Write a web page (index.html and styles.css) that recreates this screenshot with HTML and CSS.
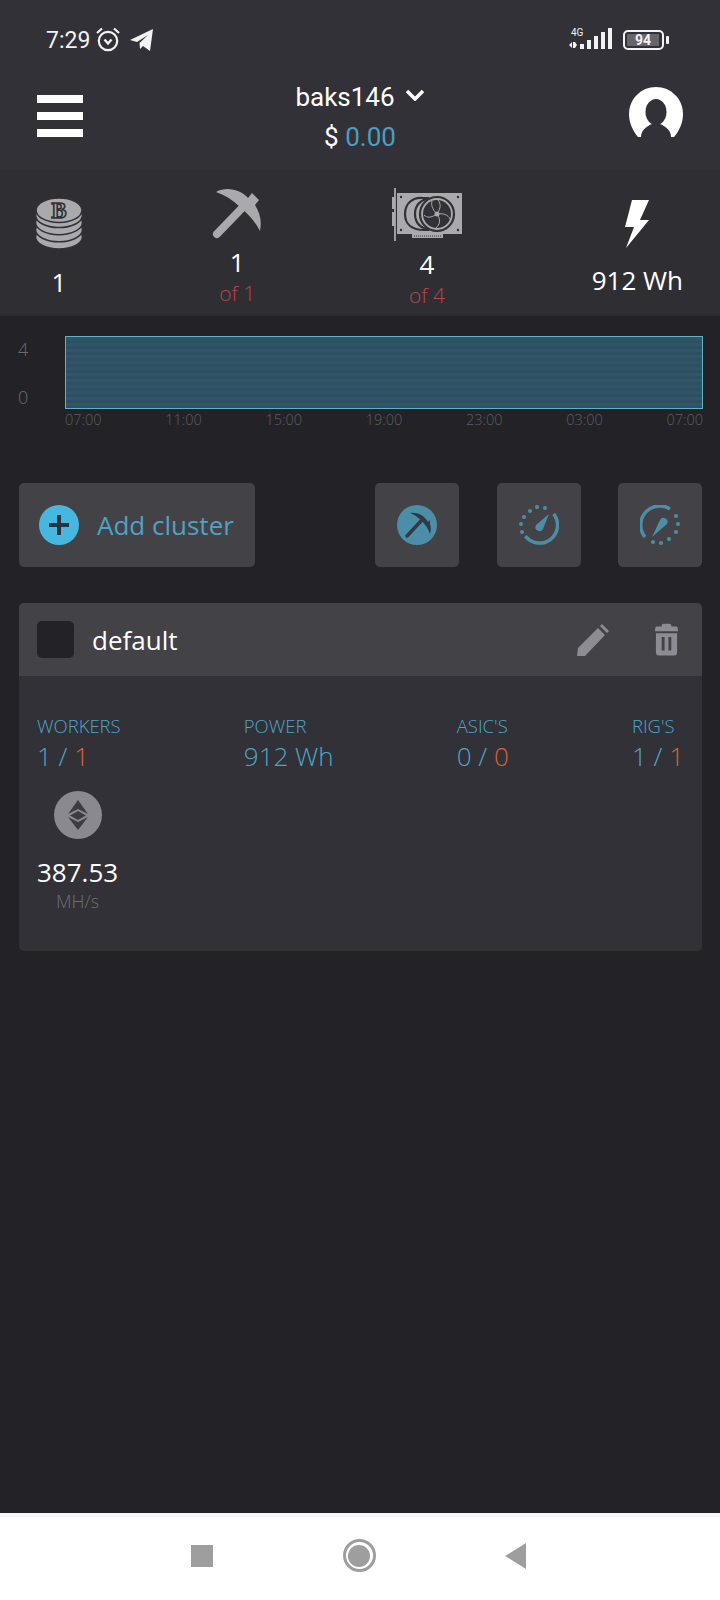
FILE: index.html
```html
<!DOCTYPE html>
<html lang="en">
<head>
<meta charset="utf-8">
<title>Clusters</title>
<link rel="stylesheet" href="styles.css">
</head>
<body>
<div class="page">
  <div class="top">
    <div class="status">
      <div class="status-left">
        <span class="clock">7:29</span>
        <svg class="alarm" width="26" height="26" viewBox="0 0 26 26"><circle cx="13" cy="14" r="9.2" fill="none" stroke="#f2f2f2" stroke-width="2.2"/><path d="M2 6 L7 1.5 M24 6 L19 1.5" stroke="#f2f2f2" stroke-width="2.2" fill="none"/><path d="M9.5 12.5 L13 16.5 L16.5 12.5" stroke="#f2f2f2" stroke-width="2.4" fill="none"/></svg>
        <svg class="plane" width="24" height="24" viewBox="0 0 24 24"><path d="M0 12 L23 1 L20 23 L13 18 L10 21 L9.500 15 L18 7 L7 14 Z" fill="#f2f2f2"/></svg>
      </div>
      <div class="status-right">
        <svg width="46" height="26" viewBox="0 0 46 26"><text x="3" y="9" class="net">4G</text><path d="M1 18 L4 15 V21 Z M5 15 H7 L9 18 L7 21 H5 Z" fill="#f2f2f2"/><g fill="#f2f2f2"><rect x="12" y="17" width="4" height="5"/><rect x="19" y="13" width="4" height="9"/><rect x="26" y="9" width="4" height="13"/><rect x="33" y="5" width="4" height="17"/><rect x="40" y="1" width="4" height="21"/></g></svg>
        <div class="battery"><div class="battery-fill"><span>94</span></div></div>
        <span class="battery-tip"></span>
      </div>
    </div>
    <header class="head">
      <div class="burger"><span></span><span></span><span></span></div>
      <div class="title">
        <div class="user">baks146
          <svg width="20" height="12" viewBox="0 0 20 12"><path d="M2 2 L10 10 L18 2" fill="none" stroke="#fff" stroke-width="3.500"/></svg>
        </div>
        <div class="money">$ <span class="blue">0.00</span></div>
      </div>
      <svg class="avatar" width="54" height="50" viewBox="0 0 54 50"><path d="M27 0 C42 0 54 12 54 27 C54 36 50 44 45 50 H9 C4 44 0 36 0 27 C0 12 12 0 27 0 Z" fill="#fff"/><ellipse cx="27" cy="25" rx="10.500" ry="13" fill="#323137"/><path d="M12 50 C12 43 18 39 23 37 H31 C36 39 42 43 42 50 Z" fill="#323137"/></svg>
    </header>
  </div>

  <section class="stats">
    <div class="stat">
      <svg width="48" height="52" viewBox="0 0 46 51"><g fill="#aaa9ab" stroke="#323137" stroke-width="1.5"><ellipse cx="23" cy="38" rx="23" ry="12"/><ellipse cx="23" cy="31" rx="23" ry="12"/><ellipse cx="23" cy="24" rx="23" ry="12"/><ellipse cx="23" cy="17" rx="23" ry="12"/><ellipse cx="23" cy="12" rx="22.500" ry="12"/></g><text x="23" y="20" class="btc">B</text></svg>
      <div class="num val-low">1</div>
    </div>
    <div class="stat">
      <svg width="50" height="50" viewBox="0 0 50 50"><path d="M4 3 C15 -3 29 1 36 9 L40 4 L47 11 L43 16 C48 24 50 32 48 42 C43 32 35 24 28 18 C21 11 13 6 4 3 Z" fill="#aaa9ab"/><path d="M5 45 L32 17" stroke="#aaa9ab" stroke-width="8" stroke-linecap="round"/></svg>
      <div class="num">1</div>
      <div class="of">of 1</div>
    </div>
    <div class="stat">
      <svg width="71" height="53" viewBox="0 0 71 53">
        <path d="M4 0 V53" stroke="#aaa9ab" stroke-width="1.800"/><path d="M1 9 H4 V21 H1 Z M1 24 H4 V38 H1 Z" fill="#aaa9ab"/>
        <rect x="6" y="5" width="65" height="41" fill="#aaa9ab"/>
        <path d="M21 46 H52 V50 H21 Z" fill="#aaa9ab"/><path d="M23 48 H50" stroke="#323137" stroke-width="1" stroke-dasharray="1 1"/>
        <path d="M32 10 C22 9 14 15 14 26 C14 37 22 42 33 42 H38 C30 40 24 35 24 26 C24 17 30 12 38 10 Z" fill="none" stroke="#323137" stroke-width="2.200"/>
        <circle cx="46" cy="26" r="17" fill="none" stroke="#323137" stroke-width="2.200"/>
        <circle cx="46" cy="26" r="14" fill="#323137"/>
        <g stroke="#aaa9ab" stroke-width="1" fill="none"><path d="M46 26 C50 20 50 16 47 12"/><path d="M46 26 C53 25 57 27 59 31"/><path d="M46 26 C50 32 49 36 45 40"/><path d="M46 26 C40 30 36 30 33 27"/><path d="M46 26 C41 21 40 17 41 13"/></g>
        <circle cx="46" cy="26" r="2.500" fill="#aaa9ab"/>
        <g fill="#323137"><circle cx="10" cy="9" r="1.200"/><circle cx="67" cy="9" r="1.200"/><circle cx="10" cy="42" r="1.200"/><circle cx="67" cy="42" r="1.200"/></g>
      </svg>
      <div class="num">4</div>
      <div class="of">of 4</div>
    </div>
    <div class="stat">
      <svg width="24" height="48" viewBox="0 0 24 48"><path d="M7 0 H24 L15 20 H24 L1 48 L9 27 H0 Z" fill="#fff"/></svg>
      <div class="num val-low">912 Wh</div>
    </div>
  </section>

  <section class="chart">
    <div class="y-axis"><span>4</span><span>0</span></div>
    <div class="plot-wrap">
      <div class="plot"></div>
      <div class="x-axis"><span>07:00</span><span>11:00</span><span>15:00</span><span>19:00</span><span>23:00</span><span>03:00</span><span>07:00</span></div>
    </div>
  </section>

  <section class="actions">
    <button class="btn add">
      <svg width="40" height="40" viewBox="0 0 40 40"><circle cx="20" cy="20" r="20" fill="#46b8e0"/><path d="M20 10 V30 M10 20 H30" stroke="#27343d" stroke-width="4"/></svg>
      <span>Add cluster</span>
    </button>
    <div class="tools">
      <button class="btn tool"><svg width="40" height="40" viewBox="0 0 40 40"><circle cx="20" cy="20" r="20" fill="#4c8ea8"/><path d="M13 8 C20 7 27 10 31 17 L33 15 L33 19 C34 22 34 26 33 29 C31 23 27 17 20 12 C18 10 15 9 13 8 Z" fill="#303a44"/><path d="M10 31 L24 16" stroke="#303a44" stroke-width="3.500" stroke-linecap="round"/></svg></button>
      <button class="btn tool"><svg width="40" height="40" viewBox="0 0 40 40"><path d="M33 7 A18 18 0 1 1 8 33" transform="rotate(8 20 20)" fill="none" stroke="#4c8ea8" stroke-width="3.500"/><g fill="#4c8ea8"><circle cx="3" cy="27" r="2"/><circle cx="2" cy="19" r="2"/><circle cx="5" cy="12" r="2"/><circle cx="11" cy="6" r="2"/><circle cx="18" cy="2" r="2"/><circle cx="26" cy="3" r="2"/><path d="M30 9 L24 24 A4 4 0 0 1 17 20 Z"/></g></svg></button>
      <button class="btn tool"><svg width="40" height="40" viewBox="0 0 40 40"><path d="M5 32 A19 19 0 0 1 30 4" fill="none" stroke="#4c8ea8" stroke-width="3.500"/><g fill="#4c8ea8"><circle cx="36" cy="11" r="2"/><circle cx="38" cy="19" r="2"/><circle cx="36" cy="27" r="2"/><circle cx="29" cy="34" r="2"/><circle cx="21" cy="38" r="2"/><circle cx="13" cy="37" r="2"/><path d="M12 32 L20 15 A4 4 0 0 1 27 19 Z"/></g></svg></button>
    </div>
  </section>

  <section class="card">
    <div class="card-head">
      <span class="check"></span>
      <span class="card-name">default</span>
      <svg class="pencil" width="32" height="32" viewBox="0 0 32 32"><path d="M0 32 L1 24 L21 4 L28 11 L8 32 Z M23 2 L25 0 L32 7 L30 9 Z" fill="#8d8c92"/></svg>
      <svg class="trash" width="25" height="34" viewBox="0 0 26 34"><path d="M8 2 C8 1 9 0 10 0 H16 C17 0 18 1 18 2 V3 H23 C24.500 3 25 5 25 8 H1 C1 5 1.500 3 3 3 H8 Z" fill="#8d8c92"/><path d="M2 10 H24 V30 A3 3 0 0 1 21 33 H5 A3 3 0 0 1 2 30 Z M8 14 V28 H11 V14 Z M15 14 V28 H18 V14 Z" fill="#8d8c92" fill-rule="evenodd"/></svg>
    </div>
    <div class="card-body">
      <div class="metrics">
        <div class="metric"><div class="m-label">WORKERS</div><div class="m-val">1 / <span class="orange">1</span></div></div>
        <div class="metric"><div class="m-label">POWER</div><div class="m-val">912 Wh</div></div>
        <div class="metric"><div class="m-label">ASIC'S</div><div class="m-val">0 / <span class="orange">0</span></div></div>
        <div class="metric"><div class="m-label">RIG'S</div><div class="m-val">1 / <span class="orange">1</span></div></div>
      </div>
      <div class="coin">
        <svg width="48" height="48" viewBox="0 0 48 48"><circle cx="24" cy="24" r="24" fill="#8a898f"/><path d="M24 9 L14 23 L24 18 L34 23 Z M14 26 L24 39 L34 26 L24 31 Z M16 24.500 L24 20 L32 24.500 L24 29 Z" fill="#3d3c43"/></svg>
        <div class="rate">387.53</div>
        <div class="unit">MH/s</div>
      </div>
    </div>
  </section>

  <div class="spacer"></div>

  <nav class="nav">
    <span class="nav-square"></span>
    <span class="nav-home"><span></span></span>
    <svg width="22" height="26" viewBox="0 0 22 26"><path d="M0 13 L21 0 V26 Z" fill="#9e9e9e"/></svg>
  </nav>
</div>
</body>
</html>
```

FILE: styles.css
```css
* { box-sizing: border-box; }
html, body { margin: 0; padding: 0; }
body { background: #232327; font-family: "Open Sans", sans-serif; color: #fff; }
svg { display: block; flex: none; }
.page { width: 720px; height: 1600px; display: flex; flex-direction: column; }
.blue { color: #4a9fc2; }
.orange { color: #d9623a; }

.top { background: #323137; height: 170px; font-family: Roboto, sans-serif; }
.status { height: 80px; display: flex; justify-content: space-between; align-items: center; padding: 0 51px 0 46px; }
.status-left { display: flex; align-items: center; }
.clock { font-size: 23px; color: #f2f2f2; width: 49px; }
.alarm { margin-right: 9px; }
.status-right { display: flex; align-items: center; }
.net { font-family: Roboto, sans-serif; font-size: 10px; fill: #f2f2f2; }
.battery { width: 41px; height: 20px; border: 2.500px solid #f4f4f4; border-radius: 5px; padding: 2px; margin-left: 9px; }
.battery-fill { height: 100%; width: 32px; background: #666569; border-radius: 1px; display: flex; align-items: center; justify-content: center; }
.battery-fill span { font-size: 14px; font-weight: 700; color: #f2f2f2; line-height: 1; }
.battery-tip { width: 3px; height: 8px; background: #f4f4f4; margin-left: 2px; border-radius: 1px; }

.head { display: grid; grid-template-columns: 1fr auto 1fr; padding: 0 37px; align-items: start; }
.burger { display: flex; flex-direction: column; gap: 9px; margin-top: 15px; justify-self: start; }
.burger span { width: 46px; height: 8px; background: #fff; }
.title { display: flex; flex-direction: column; align-items: center; }
.user { display: flex; align-items: center; gap: 10px; font-size: 26px; line-height: 34px; margin-top: 0; }
.user svg { margin-top: -4px; }
.money { font-size: 26px; line-height: 34px; margin-top: 6px; margin-right: 0; }
.avatar { justify-self: end; margin-top: 7px; }

.stats { height: 146px; background: #2f2f33; border-bottom: 2px solid #2b2b2f; display: flex; justify-content: space-between; align-items: center; padding: 0 37px 0 35px; }
.stat { display: flex; flex-direction: column; align-items: center; padding-top: 12px; }
.num { font-size: 26px; line-height: 34px; color: #fff; margin-top: 6px; }
.val-low { margin-top: 15px; }
.of { font-size: 21px; line-height: 28px; color: #b8454f; font-weight: 300; margin-top: 0; }
.btc { font-family: "Liberation Serif", serif; font-weight: 700; font-size: 22px; fill: #aaa9ab; stroke: #323137; stroke-width: 1.6px; text-anchor: middle; }

.chart { display: flex; padding: 20px 17px 0 18px; height: 167px; }
.y-axis { width: 47px; height: 73px; display: flex; flex-direction: column; justify-content: space-between; font-size: 18px; font-weight: 300; color: #6a696e; line-height: 26px; }
.y-axis span:last-child { margin-bottom: -1px; }
.plot-wrap { flex: 1; }
.plot { height: 73px; background: repeating-linear-gradient(180deg, #2f5566 0 3px, #2d5162 3px 6px); border: 1px solid #66b0c6; }
.x-axis { display: flex; justify-content: space-between; font-size: 14.500px; font-weight: 300; color: #5e5d63; line-height: 22px; }

.actions { display: flex; justify-content: space-between; padding: 0 18px 0 19px; }
.btn { border: 0; background: #434247; border-radius: 5px; height: 84px; display: flex; align-items: center; justify-content: center; padding: 0; font-family: inherit; }
.add { width: 236px; justify-content: flex-start; padding-left: 20px; gap: 18px; font-size: 26px; color: #4fa3c4; }
.tools { display: flex; gap: 37.500px; }
.tool { width: 84px; }

.card { margin: 36px 18px 0 19px; height: 348px; background: #323137; border-radius: 5px; overflow: hidden; }
.card-head { height: 73px; background: #434247; display: flex; align-items: center; padding: 0 21px 0 18px; }
.check { width: 37px; height: 37px; background: #232327; border-radius: 5px; }
.card-name { font-size: 26px; color: #fff; margin-left: 18px; flex: 1; }
.pencil { margin-right: 45px; }
.trash { margin-right: 2px; }
.card-body { padding: 36px 18px 0 18px; }
.metrics { display: flex; justify-content: space-between; }
.m-label { font-size: 18.500px; line-height: 28px; font-weight: 300; color: #4ea5c6; }
.m-val { font-size: 26px; line-height: 32px; font-weight: 300; color: #4ea5c6; }
.coin { display: inline-flex; flex-direction: column; align-items: center; margin-top: 19px; }
.rate { font-size: 26px; line-height: 36px; color: #fff; margin-top: 15px; }
.unit { font-size: 18px; line-height: 26px; font-weight: 300; color: #6f6e74; margin-top: -2px; }

.spacer { flex: 1; }
.nav { height: 87px; background: #fff; border-top: 4px solid #f6f6f6; display: flex; align-items: center; padding: 0 193px 6px 191px; justify-content: space-between; }
.nav-square { width: 22px; height: 22px; background: #9e9e9e; }
.nav-home { width: 33px; height: 33px; border: 3px solid #9e9e9e; border-radius: 50%; display: flex; align-items: center; justify-content: center; }
.nav-home span { width: 22px; height: 22px; background: #9e9e9e; border-radius: 50%; }
```
